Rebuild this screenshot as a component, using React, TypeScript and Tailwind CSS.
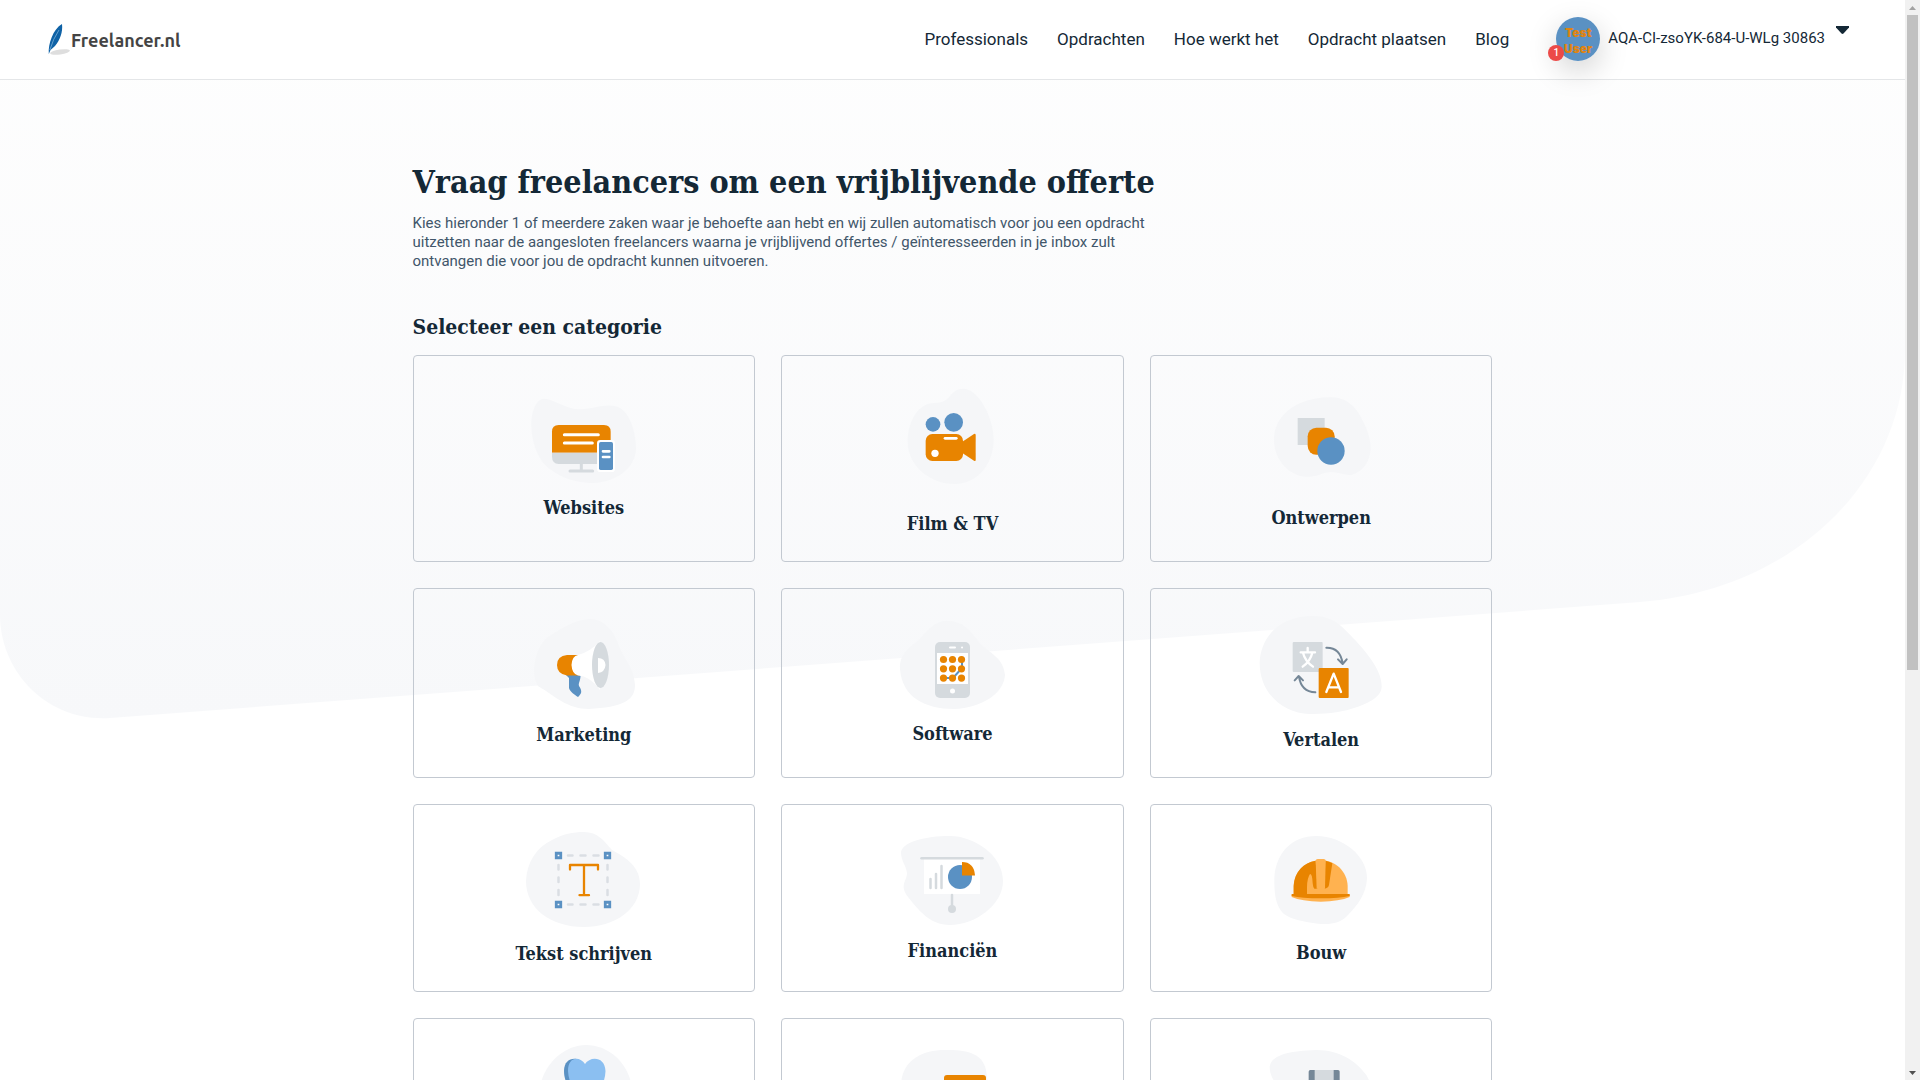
import type { ReactNode } from "react";

type Category = { title?: string; view: string; height: string; art: ReactNode };

const ORANGE = "#e88400";
const BLUE = "#5a91c3";
const GREY = "#d5dade";
const BLOB = "#f5f6f8";
const DOTS = [0, 1, 2];

const categories: Category[] = [
  {
    title: "Websites",
    view: "312 93 480 345",
    height: "h-[115px]",
    art: (
      <>
        <path fill={BLOB} d="M432 146C462 146 495 178 542 178C582 177 615 160 652 170C688 182 709 247 708 298C706 352 650 398 580 399C510 399 452 368 425 332C402 298 393 255 394 215C396 178 410 147 432 146Z" />
        <path fill={ORANGE} d="M456 308V245Q456 225 476 225H612Q632 225 632 245V308Z" />
        <path fill={GREY} d="M456 308H632V342H476Q456 340 456 320Z" />
        <path stroke={GREY} strokeWidth="9" strokeLinecap="round" d="M544 342V362M510 363H578" />
        <path stroke="#fff" strokeWidth="9" strokeLinecap="round" d="M493 254H595M493 279H577" />
        <rect x="591" y="270" width="54" height="96" rx="10" fill="#fff" />
        <rect x="597" y="276" width="42" height="84" rx="5" fill={BLUE} />
        <path stroke="#fff" strokeWidth="8" strokeLinecap="round" d="M609 304H628M609 321H628" />
      </>
    ),
  },
  {
    title: "Film & TV",
    view: "307 93 480 393",
    height: "h-[131px]",
    art: (
      <>
        <path fill={BLOB} d="M582 116C628 118 672 205 672 268C672 345 620 403 555 402C480 402 414 345 414 275C414 215 445 165 485 160C512 158 523 158 538 142C550 126 562 116 582 116Z" />
        <circle cx="490" cy="223" r="22" fill={BLUE} />
        <circle cx="552" cy="217" r="28" fill={BLUE} />
        <rect x="468" y="252" width="112" height="81" rx="20" fill={ORANGE} />
        <path fill={ORANGE} d="M578 275L613 252Q618 250 618 255V330Q618 335 613 332L578 309Z" />
        <path stroke="#fff" strokeWidth="8" strokeLinecap="round" d="M526 265H560" />
        <circle cx="496" cy="310" r="11" fill="#fff" />
      </>
    ),
  },
  {
    title: "Ontwerpen",
    view: "304 93 480 375",
    height: "h-[125px]",
    art: (
      <>
        <path fill={BLOB} d="M570 142C605 140 636 157 655 187C675 220 694 260 693 298C690 335 670 365 637 374C618 378 600 366 572 366C545 368 535 382 497 380C450 378 402 330 403 268C404 215 438 180 480 160C510 147 540 142 570 142Z" />
        <rect x="474" y="204" width="81" height="81" fill={GREY} />
        <rect x="504" y="233" width="81" height="81" rx="26" fill={ORANGE} />
        <circle cx="574" cy="303" r="41" fill={BLUE} />
      </>
    ),
  },
  {
    title: "Marketing",
    view: "504 614 160 109",
    height: "h-[109px]",
    art: (
      <>
        <path fill={BLOB} d="M590 619C604 619 614 631 619 646C624 660 634 667 635 685C635 701 622 707 589 709C567 709 555 696 538 686C529 671 537 645 548 637C561 629 573 620 590 619Z" />
        <path fill={BLUE} d="M565 674H580.5C581 680 578 683 579 686C583 692 581 694 578 697C575 695 570 692 569 688V678Z" />
        <path fill={ORANGE} d="M580 655H567Q557 656 557 665Q557 674 567 675.500H580Z" />
        <path fill="#fff" d="M578 655Q590 652 600 641V690Q590 676 578 675.500Q572 674 571.500 665Q572 656 578 655Z" />
        <ellipse cx="600.500" cy="665" rx="8.500" ry="23" fill={GREY} />
        <path fill="#fff" d="M598 658Q605 658 605.500 665Q605 672 598 673Z" />
      </>
    ),
  },
  {
    title: "Software",
    view: "872 614 160 108",
    height: "h-[108px]",
    art: (
      <>
        <path fill={BLOB} d="M946 621C960 620 969 628 978 641C988 653 1003 656 1005 675C1004 693 982 708 954 709C925 709 902 697 900 669C899 654 910 647 920 639C928 629 936 621 946 621Z" />
        <rect x="935" y="642" width="35" height="56" rx="5" fill={GREY} />
        <rect x="937" y="653" width="31" height="31" fill="#fff" />
        <path stroke="#fff" strokeWidth="2" strokeLinecap="round" d="M950 647.500H955M962 647.500H962.100" />
        <circle cx="952.500" cy="691" r="2.500" fill="#fff" />
        <path stroke={BLUE} strokeWidth="2" fill="none" d="M944 678H953L962 668V659" />
        {DOTS.map((row) =>
          DOTS.map((col) => (
            <circle key={row * 3 + col} cx={943.5 + col * 9} cy={659.5 + row * 9.3} r="3.600" fill={ORANGE} />
          )),
        )}
      </>
    ),
  },
  {
    title: "Vertalen",
    view: "304 102 480 342",
    height: "h-[114px]",
    art: (
      <>
        <path fill={BLOB} d="M520 108C560 108 590 120 622 155C670 203 727 265 726 320C725 350 690 367 650 382C610 396 565 403 510 402C430 400 360 340 360 248C362 180 410 108 520 108Z" />
        <rect x="459" y="186" width="90" height="90" rx="3" fill={GREY} />
        <path stroke="#fff" strokeWidth="7" strokeLinecap="round" fill="none" d="M504 204V217M483 217H526M490 218Q496 243 520 260M518 218Q512 243 489 260" />
        <rect x="537" y="264" width="90" height="90" rx="3" fill={ORANGE} />
        <path stroke="#fff" strokeWidth="7" strokeLinecap="round" strokeLinejoin="round" fill="none" d="M560 336L582 281L604 336M567 322H597" />
        <path stroke="#758797" strokeWidth="6" strokeLinecap="round" strokeLinejoin="round" fill="none" d="M560 203Q602 202 609 251M595 238L609 252L621 238M527 337Q484 335 478 289M465 301L477 288L490 301" />
      </>
    ),
  },
  {
    title: "Tekst schrijven",
    view: "504 830 160 112",
    height: "h-[112px]",
    art: (
      <>
        <path fill={BLOB} d="M584 832C598 832 604 841 612 850C623 856 640 865 640 884C640 910 614 927 584 927C550 927 526 908 526 881C527 862 536 848 552 840C563 834 573 832 584 832Z" />
        <path stroke="#dadee3" strokeWidth="2.500" strokeLinecap="round" d="M568 855.500H572.500M580.500 855.500H585.500M593.500 855.500H598.500M568 904.500H572.500M580.500 904.500H585.500M593.500 904.500H598.500M558.500 865V869.500M558.500 877.500V882M558.500 890V895M607.500 865V869.500M607.500 877.500V882M607.500 890V895" />
        <path stroke={BLUE} strokeWidth="2.800" fill="#fff" d="M556.250 853.250h4.500v4.500h-4.500zM605.250 853.250h4.500v4.500h-4.500zM556.250 902.250h4.500v4.500h-4.500zM605.250 902.250h4.500v4.500h-4.500z" />
        <path stroke={ORANGE} strokeWidth="2.300" strokeLinecap="round" strokeLinejoin="round" fill="none" d="M570 869.500V865H598V869.500M584 865V895M579.500 895.200H589" />
      </>
    ),
  },
  {
    title: "Financiën",
    view: "872 830 160 109",
    height: "h-[109px]",
    art: (
      <>
        <path fill={BLOB} d="M950 836C974 836 1003 855 1003 881C1003 905 975 925 950 925C929 925 918 909 908 897C899 885 907 881 907 873C906 865 901 861 901 852C903 842 925 836 950 836Z" />
        <rect x="924" y="859" width="56" height="35" fill="#fff" />
        <path stroke={GREY} strokeWidth="2.500" strokeLinecap="round" d="M921.500 858.300H982.500" />
        <path stroke={GREY} strokeWidth="2.500" strokeLinecap="round" d="M930.500 879V888M936 874V888M941.500 866V888M952 895V906" />
        <circle cx="952" cy="909" r="4" fill={GREY} />
        <circle cx="960" cy="877" r="12" fill={BLUE} />
        <path fill={ORANGE} d="M962 862Q974 862 975 875.500H962Z" />
      </>
    ),
  },
  {
    title: "Bouw",
    view: "304 90 480 333",
    height: "h-[111px]",
    art: (
      <>
        <path fill={BLOB} d="M530 108C610 108 684 170 682 235C680 280 655 315 625 345C600 372 570 374 535 371C495 366 455 360 430 340C405 312 404 275 404 235C408 160 455 108 530 108Z" />
        <path fill="#ffb250" d="M462 284V258C464 215 497 182 543 180C590 182 622 215 624 258V284Z" />
        <path fill={ORANGE} d="M462 284V258C464 215 492 188 528 182L534 266H524Q520 262 519 250Q518 222 511 222Q502 235 502 262V284Z" />
        <path fill={ORANGE} d="M557 182Q568 184 578 190L568 255Q566 265 554 266Z" />
        <path fill="#ffb250" d="M528 182Q528 177 534 177H552Q558 177 558 182L556 266H531Z" />
        <path fill="#ffb250" d="M456 284H630V291Q600 304 543 305Q486 304 456 291Z" />
        <path fill={ORANGE} d="M456 282H630V288Q600 295 543 295Q486 295 456 288Z" />
      </>
    ),
  },
  {
    view: "504 1044 160 110",
    height: "h-[110px]",
    art: (
      <>
        <path fill={BLOB} d="M586 1045C612 1045 631 1068 632 1090C632 1120 612 1137 586 1137C560 1137 540 1120 540 1090C541 1068 562 1045 586 1045Z" />
        <path fill={BLUE} d="M584 1065C580 1056 564 1056 564 1071C564 1086 575 1096 584 1104Z" />
        <path fill="#8bbff1" d="M585 1064C580 1056 568 1056 568 1071C569 1086 577 1096 585 1104C596 1096 605 1086 605.500 1071C605 1056 590 1056 585 1064Z" />
      </>
    ),
  },
  {
    view: "872 1044 160 110",
    height: "h-[110px]",
    art: (
      <>
        <path fill={BLOB} d="M945 1050C965 1050 982 1052 986 1070L992 1110C980 1137 950 1140 925 1130C905 1115 899 1090 902 1077C906 1060 922 1050 945 1050Z" />
        <rect x="944" y="1075" width="42" height="36" rx="3" fill={ORANGE} />
      </>
    ),
  },
  {
    view: "304 732 480 330",
    height: "h-[110px]",
    art: (
      <>
        <path fill={BLOB} d="M530 750C600 750 650 783 680 825C720 890 690 990 600 1000C500 1010 420 960 420 900C420 850 390 840 390 800C395 765 450 752 530 750Z" />
        <rect x="507" y="810" width="93" height="120" rx="5" fill="#758797" />
        <rect x="525" y="810" width="57" height="120" fill={GREY} />
      </>
    ),
  },
];

const SLAB = "font-['Roboto_Slab','DejaVu_Serif_Condensed','DejaVu_Serif',serif]";
const navItems = ["Professionals", "Opdrachten", "Hoe werkt het", "Opdracht plaatsen", "Blog"];

function Logo() {
  return (
    <a href="#" className="flex items-center">
      <svg viewBox="0 0 23 32" className="h-8 w-[23px]" aria-hidden="true">
        <ellipse cx="12" cy="28" rx="10" ry="2.500" fill="#dedede" transform="rotate(-8 12 28)" />
        <path fill="#0f62a6" d="M14 0C15 8 12 16 7 22L2.500 26L0.800 30C0 20 5 5 14 0Z" />
        <path stroke="#8bbbe0" strokeWidth="0.700" fill="none" d="M11 6Q5 15 1.800 26" />
      </svg>
      <span className="font-['Ubuntu','Noto_Sans',sans-serif] text-[18px] font-bold leading-6 text-[#444]">Freelancer.nl</span>
    </a>
  );
}

function Header() {
  return (
    <header className="relative flex h-20 items-center justify-between border-b border-[#e4e6e8] bg-white pl-12 pr-[56px]">
      <Logo />
      <div className="flex items-center">
        <nav className="flex gap-[29px] text-[17px]">
          {navItems.map((item) => (
            <a key={item} href="#">{item}</a>
          ))}
        </nav>
        <div className="relative mb-0.5 ml-[47px] size-11 rounded-full shadow-[0_10px_30px_rgba(0,0,0,0.18)]">
          <div className="flex size-11 flex-col items-center justify-center rounded-full bg-[#5a91c3] pt-1 font-[Inter,sans-serif] text-[12px] font-black leading-4 text-[#e08410]">
            <span>Test</span>
            <span>User</span>
          </div>
          <span className="absolute -left-2 bottom-0 flex size-4 items-center justify-center rounded-full bg-[#ec4a48] text-[10px] font-medium text-white">1</span>
        </div>
        <button type="button" className="ml-2 flex items-center gap-[11px] text-[15px] leading-5">
          <span className="pb-1">AQA-CI-zsoYK-684-U-WLg 30863</span>
          <svg viewBox="0 0 13 8" className="mb-5 h-2 w-[13px]" aria-hidden="true">
            <path fill="#142836" d="M0 0H13V1.500L7.500 7.500Q6.500 8.300 5.500 7.500L0 1.500Z" />
          </svg>
        </button>
      </div>
    </header>
  );
}

function CategoryCard({ title, view, height, art }: Category) {
  return (
    <a href="#" aria-label={title ?? "Categorie"} className="flex flex-col items-center rounded border border-[#c3c9d1] py-[25px]">
      <svg viewBox={view} fill="none" className={`w-40 ${height}`} aria-hidden="true">{art}</svg>
      {title && <h3 className={`${SLAB} text-[18px] font-bold leading-6`}>{title}</h3>}
    </a>
  );
}

function ScrollRail() {
  return (
    <div className="flex w-[15px] shrink-0 flex-col items-center bg-[#f1f1f1]" aria-hidden="true">
      <svg viewBox="0 0 15 15" className="size-[15px]"><path fill="#a3a3a3" d="M4 10L7.500 6L11 10Z" /></svg>
      <div className="h-[655px] w-[11px] bg-[#c1c1c1]" />
      <div className="grow" />
      <svg viewBox="0 0 15 15" className="size-[15px]"><path fill="#505050" d="M4 6H11L7.500 10Z" /></svg>
    </div>
  );
}

export default function App() {
  return (
    <div className="flex h-screen overflow-hidden bg-white font-[Roboto,sans-serif] text-[#142836]">
      <div className="relative min-w-0 grow overflow-hidden">
        <svg viewBox="0 0 1905 720" preserveAspectRatio="none" className="absolute inset-x-0 top-0 h-[720px] w-full" aria-hidden="true">
          <defs>
            <linearGradient id="backdrop" x1="0" y1="0" x2="0" y2="1">
              <stop offset="0" stopColor="#fefefe" />
              <stop offset="1" stopColor="#f7f8fa" />
            </linearGradient>
          </defs>
          <path fill="url(#backdrop)" d="M0 0H1905V350C1905 480 1795 590 1640 602L110 718C45 722 0 670 0 615Z" />
        </svg>
        <Header />
        <main className="relative mx-auto max-w-[1080px] pt-20">
          <h1 className={`${SLAB} text-[32px] font-bold leading-[44px]`}>Vraag freelancers om een vrijblijvende offerte</h1>
          <p className="mt-[10px] max-w-[744px] text-[15px] leading-[19px] text-[#41566a]">
            Kies hieronder 1 of meerdere zaken waar je behoefte aan hebt en wij zullen automatisch voor jou een opdracht
            uitzetten naar de aangesloten freelancers waarna je vrijblijvend offertes / geïnteresseerden in je inbox zult
            ontvangen die voor jou de opdracht kunnen uitvoeren.
          </p>
          <h2 className={`${SLAB} mt-10 text-[21px] font-bold leading-8`}>Selecteer een categorie</h2>
          <div className="mt-3 grid grid-cols-3 gap-[26px]">
            {categories.map((category, index) => (
              <CategoryCard key={index} {...category} />
            ))}
          </div>
        </main>
      </div>
      <ScrollRail />
    </div>
  );
}
